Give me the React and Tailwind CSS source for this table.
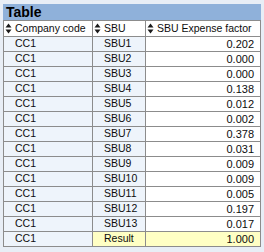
const rows = [
  ["SBU1", "0.202"],
  ["SBU2", "0.000"],
  ["SBU3", "0.000"],
  ["SBU4", "0.138"],
  ["SBU5", "0.012"],
  ["SBU6", "0.002"],
  ["SBU7", "0.378"],
  ["SBU8", "0.031"],
  ["SBU9", "0.009"],
  ["SBU10", "0.009"],
  ["SBU11", "0.005"],
  ["SBU12", "0.197"],
  ["SBU13", "0.017"],
]

function SortIcon() {
  return (
    <svg width="7" height="11" viewBox="0 0 7 11" className="shrink-0">
      <path d="M3.5 0.5 L6.5 4.5 L0.5 4.5 Z" fill="#1a1a1a" />
      <path d="M3.5 10.5 L6.5 6.5 L0.5 6.5 Z" fill="#1a1a1a" />
    </svg>
  )
}

function Head({ label }) {
  return (
    <div className="h-[16px] bg-white border-r border-b border-[#8c8c8c] flex items-center pl-[1px] gap-[3px] text-[10.5px]">
      <SortIcon />
      <span>{label}</span>
    </div>
  )
}

export default function App() {
  return (
    <div
      className="w-[264px] h-[252px] bg-[#e8eef6] pt-[4px] pl-[3px] text-[11px] text-[#0d0d0d]"
      style={{ fontFamily: '"Liberation Sans", Arial, sans-serif' }}
    >
      <div className="w-[258px] h-[16px] bg-[#8fb1da] flex items-center pl-[3px]">
        <span className="font-bold text-[14px] leading-none text-black">Table</span>
      </div>
      <div className="w-[258px] grid grid-cols-[89px_53px_115px] border-l border-t border-[#8c8c8c]">
        <Head label="Company code" />
        <Head label="SBU" />
        <Head label="SBU Expense factor" />
        {rows.map(([sbu, val]) => (
          <div key={sbu} className="contents">
            <div className="h-[15px] bg-[#eef4fb] border-r border-b border-[#8c8c8c] flex items-center pl-[11px] text-[10.5px]">CC1</div>
            <div className="h-[15px] bg-[#eef4fb] border-r border-b border-[#8c8c8c] flex items-center pl-[11px] text-[10.5px]">{sbu}</div>
            <div className="h-[15px] bg-white border-r border-b border-[#8c8c8c] flex items-center justify-end pr-[6px]">{val}</div>
          </div>
        ))}
        <div className="h-[15px] bg-[#eef4fb] border-r border-b border-[#8c8c8c] flex items-center pl-[11px] text-[10.5px]">CC1</div>
        <div className="h-[15px] bg-[#ffffc4] border-r border-b border-[#8c8c8c] flex items-center pl-[11px] text-[10.5px]">Result</div>
        <div className="h-[15px] bg-[#ffffc4] border-r border-b border-[#8c8c8c] flex items-center justify-end pr-[6px]">1.000</div>
      </div>
    </div>
  )
}
